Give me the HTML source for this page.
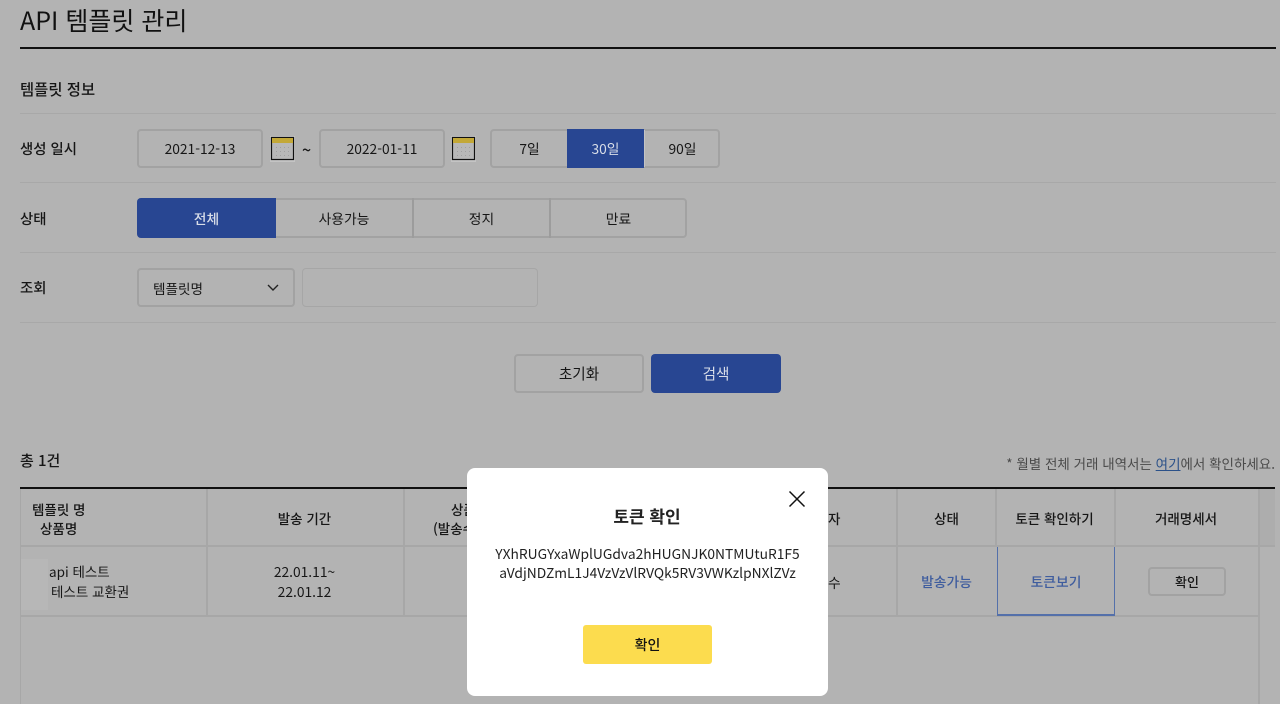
<!DOCTYPE html>
<html lang="ko"><head><meta charset="utf-8"><title>API 템플릿 관리</title>
<style>
*{box-sizing:border-box}
html,body{margin:0;padding:0}
body{width:1280px;height:704px;overflow:hidden;background:#b3b3b3;position:relative;font-family:"Noto Sans CJK KR","Liberation Sans",sans-serif;color:#161616;font-size:13.8px}
.a{position:absolute}
.t{position:absolute;white-space:nowrap;line-height:20px}
.c{position:absolute;display:flex;align-items:center;justify-content:center;white-space:nowrap}
.l{position:absolute;height:1px;background:#a8a8a8}
.v{position:absolute;width:2px;background:#a7a7a7}
.box{border:2px solid #a2a2a2;border-radius:4px}
.h{position:absolute;background:#a7a7a7;height:2px}
.th{font-size:13.5px;font-weight:500}
.lb{font-size:14.4px;font-weight:500}
.up{padding-bottom:1px}
</style></head><body>
<div class="t" style="left:20px;top:1px;font-size:25px;line-height:38px;color:#111">API 템플릿 관리</div>
<div class="a" style="left:20px;top:47px;width:1256px;height:2px;background:#111"></div>
<div class="t" style="left:20px;top:79px;font-weight:500;font-size:15.4px">템플릿 정보</div>
<div class="l" style="left:20px;top:113px;width:1256px"></div>
<div class="l" style="left:20px;top:182px;width:1256px"></div>
<div class="l" style="left:20px;top:252px;width:1256px"></div>
<div class="l" style="left:20px;top:322px;width:1256px"></div>
<div class="t lb" style="left:20px;top:139px">생성 일시</div>
<div class="t lb" style="left:20px;top:209px">상태</div>
<div class="t lb" style="left:20px;top:278px">조회</div>

<div class="c box up" style="left:137px;top:129px;width:126px;height:39px">2021-12-13</div>
<svg class="a" style="left:270px;top:136px" width="25" height="26" viewBox="0 0 25 26"><rect x="0" y="0" width="25" height="26" fill="#c4c4c4"/><rect x="1.5" y="1.5" width="22" height="22" fill="#b8b8b8" stroke="#111" stroke-width="1.2"/><rect x="2" y="2" width="21" height="5" fill="#c3a837"/><g fill="#9f9f9f"><rect x="6" y="11" width="1" height="1"/><rect x="10" y="11" width="1" height="1"/><rect x="14" y="11" width="1" height="1"/><rect x="18" y="11" width="1" height="1"/><rect x="6" y="15" width="1" height="1"/><rect x="10" y="15" width="1" height="1"/><rect x="14" y="15" width="1" height="1"/><rect x="18" y="15" width="1" height="1"/><rect x="6" y="19" width="1" height="1"/><rect x="10" y="19" width="1" height="1"/><rect x="14" y="19" width="1" height="1"/><rect x="18" y="19" width="1" height="1"/></g></svg>
<div class="t" style="left:302px;top:139px;font-size:16px;font-weight:500">~</div>
<div class="c box up" style="left:319px;top:129px;width:126px;height:39px">2022-01-11</div>
<svg class="a" style="left:451px;top:136px" width="25" height="26" viewBox="0 0 25 26"><rect x="0" y="0" width="25" height="26" fill="#c4c4c4"/><rect x="1.5" y="1.5" width="22" height="22" fill="#b8b8b8" stroke="#111" stroke-width="1.2"/><rect x="2" y="2" width="21" height="5" fill="#c3a837"/><g fill="#9f9f9f"><rect x="6" y="11" width="1" height="1"/><rect x="10" y="11" width="1" height="1"/><rect x="14" y="11" width="1" height="1"/><rect x="18" y="11" width="1" height="1"/><rect x="6" y="15" width="1" height="1"/><rect x="10" y="15" width="1" height="1"/><rect x="14" y="15" width="1" height="1"/><rect x="18" y="15" width="1" height="1"/><rect x="6" y="19" width="1" height="1"/><rect x="10" y="19" width="1" height="1"/><rect x="14" y="19" width="1" height="1"/><rect x="18" y="19" width="1" height="1"/></g></svg>

<div class="a box" style="left:490px;top:129px;width:230px;height:39px"></div>
<div class="c up" style="left:491px;top:129px;width:77px;height:39px">7일</div>
<div class="c up" style="left:567px;top:129px;width:77px;height:39px;background:#284692;color:#d8dde8">30일</div>
<div class="a" style="left:644px;top:130px;width:1px;height:37px;background:#c4c4c4"></div>
<div class="c up" style="left:645px;top:129px;width:75px;height:39px">90일</div>

<div class="a box" style="left:137px;top:198px;width:550px;height:40px"></div>
<div class="c" style="left:137px;top:198px;width:139px;height:40px;background:#284692;color:#d8dde8;border-radius:4px 0 0 4px;font-weight:500">전체</div>
<div class="c" style="left:276px;top:198px;width:136px;height:40px">사용가능</div>
<div class="v" style="left:412px;top:198px;height:40px;background:#9c9c9c"></div>
<div class="c" style="left:414px;top:198px;width:135px;height:40px">정지</div>
<div class="v" style="left:549px;top:198px;height:40px;background:#9c9c9c"></div>
<div class="c" style="left:551px;top:198px;width:135px;height:40px">만료</div>

<div class="a box" style="left:137px;top:268px;width:158px;height:39px"></div>
<div class="t" style="left:153px;top:278px;font-size:13.6px">템플릿명</div>
<svg class="a" style="left:266px;top:283px" width="14" height="10" viewBox="0 0 14 10"><path d="M2 2 L7 7 L12 2" fill="none" stroke="#222" stroke-width="1.4"/></svg>
<div class="a" style="left:302px;top:268px;width:236px;height:39px;border:1px solid #a6a6a6;border-radius:4px"></div>

<div class="c box" style="left:514px;top:354px;width:130px;height:39px;font-size:14.6px">초기화</div>
<div class="c" style="left:651px;top:354px;width:130px;height:39px;background:#284692;color:#d8dde8;border-radius:4px;font-size:14.6px">검색</div>

<div class="t" style="left:20px;top:451px;font-weight:500;font-size:15px">총 1건</div>
<div class="t" style="right:5px;top:453px;font-size:13.5px;color:#4a4a4a">* 월별 전체 거래 내역서는 <span style="color:#2b5189;text-decoration:underline">여기</span>에서 확인하세요.</div>

<div class="a" style="left:20px;top:487px;width:1255px;height:2px;background:#111"></div>
<div class="h" style="left:20px;top:545px;width:1255px"></div>
<div class="h" style="left:20px;top:615px;width:1239px"></div>
<div class="v" style="left:20px;top:489px;height:215px;width:1px"></div>
<div class="v" style="left:206px;top:489px;height:127px"></div>
<div class="v" style="left:403px;top:489px;height:127px"></div>
<div class="v" style="left:896px;top:489px;height:127px"></div>
<div class="v" style="left:995px;top:489px;height:57px"></div>
<div class="v" style="left:1114px;top:489px;height:57px"></div>
<div class="v" style="left:1258px;top:489px;height:215px"></div>
<div class="a" style="left:1260px;top:489px;width:15px;height:56px;background:#adadad"></div>

<div class="t th" style="left:32px;top:499px">템플릿 명</div>
<div class="t th" style="left:40px;top:518px">상품명</div>
<div class="c th" style="left:206px;top:490px;width:197px;height:56px">발송 기간</div>
<div class="t th" style="left:451px;top:499px">상품</div>
<div class="t th" style="left:433px;top:518px">(발송수량)</div>
<div class="t th" style="left:828px;top:508px">자</div>
<div class="c th" style="left:897px;top:490px;width:99px;height:56px">상태</div>
<div class="c th" style="left:995px;top:490px;width:119px;height:56px">토큰 확인하기</div>
<div class="c th" style="left:1114px;top:490px;width:144px;height:56px">거래명세서</div>

<div class="a" style="left:21px;top:559px;width:27px;height:51px;background:#b7b7b7"></div>
<div class="t" style="left:49px;top:561px;font-size:13.5px">api 테스트</div>
<div class="t" style="left:51px;top:581px;font-size:13.5px">테스트 교환권</div>
<div class="c" style="left:206px;top:561px;width:197px;height:20px">22.01.11~</div>
<div class="c" style="left:206px;top:581px;width:197px;height:20px">22.01.12</div>
<div class="t" style="left:828px;top:572px">수</div>
<div class="c" style="left:897px;top:547px;width:99px;height:68px;color:#3f5d9e;font-weight:500">발송가능</div>
<div class="c" style="left:997px;top:547px;width:118px;height:69px;color:#3f5d9e;font-weight:500;border:1px solid #5470aa;border-top:0;border-bottom-width:2px">토큰보기</div>
<div class="c box up" style="left:1148px;top:567px;width:78px;height:29px;font-size:13px;font-weight:500">확인</div>

<div class="a" style="left:467px;top:468px;width:361px;height:228px;background:#fff;border-radius:8px"></div>
<div class="c" style="left:467px;top:503px;width:360px;height:24px;font-size:17px;font-weight:700;color:#222">토큰 확인</div>
<svg class="a" style="left:788px;top:490px" width="18" height="18" viewBox="0 0 18 18"><path d="M1.5 1.5 L16.5 16.5 M16.5 1.5 L1.5 16.5" stroke="#111" stroke-width="1.5" fill="none"/></svg>
<div class="c" style="left:467px;top:543px;width:361px;height:20px;font-size:13.8px;color:#222">YXhRUGYxaWplUGdva2hHUGNJK0NTMUtuR1F5</div>
<div class="c" style="left:467px;top:562px;width:361px;height:20px;font-size:13.8px;color:#222">aVdjNDZmL1J4VzVzVlRVQk5RV3VWKzlpNXlZVz</div>
<div class="c" style="left:583px;top:625px;width:129px;height:39px;background:#fcdc4e;border-radius:3px;font-weight:500;color:#111;font-size:14px">확인</div>
</body></html>
